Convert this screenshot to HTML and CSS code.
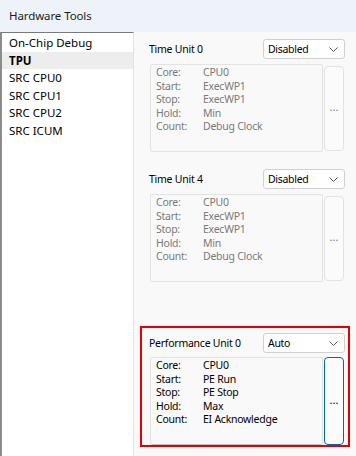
FILE: index.html
```html
<!DOCTYPE html>
<html lang="en">
<head>
    <meta charset="UTF-8">
    <meta name="viewport" content="width=device-width, initial-scale=1.0">
    <title>Hardware Tools</title>
    <link rel="stylesheet" href="styles.css">
</head>
<body>
    <div class="window">
        <div class="titlebar">Hardware Tools</div>
        <div class="main">
            <ul class="toollist">
                <li>On-Chip Debug</li>
                <li class="selected">TPU</li>
                <li>SRC CPU0</li>
                <li>SRC CPU1</li>
                <li>SRC CPU2</li>
                <li>SRC ICUM</li>
            </ul><!-- toollist -->

            <div class="panel">
                <div class="unit disabled">
                    <div class="unit-head">
                        <span class="unit-name">Time Unit 0</span>
                        <div class="combo">
                            <span>Disabled</span>
                            <svg width="9" height="5" viewBox="0 0 9 5"><polyline points="0.5,0.5 4.5,4.5 8.5,0.5" fill="none" stroke="#555" stroke-width="1"/></svg>
                        </div>
                    </div>
                    <div class="unit-body">
                        <div class="info">
                            <span>Core:</span><span>CPU0</span>
                            <span>Start:</span><span>ExecWP1</span>
                            <span>Stop:</span><span>ExecWP1</span>
                            <span>Hold:</span><span>Min</span>
                            <span>Count:</span><span>Debug Clock</span>
                        </div>
                        <div class="more">...</div>
                    </div>
                </div><!-- unit -->

                <div class="unit disabled">
                    <div class="unit-head">
                        <span class="unit-name">Time Unit 4</span>
                        <div class="combo">
                            <span>Disabled</span>
                            <svg width="9" height="5" viewBox="0 0 9 5"><polyline points="0.5,0.5 4.5,4.5 8.5,0.5" fill="none" stroke="#555" stroke-width="1"/></svg>
                        </div>
                    </div>
                    <div class="unit-body">
                        <div class="info">
                            <span>Core:</span><span>CPU0</span>
                            <span>Start:</span><span>ExecWP1</span>
                            <span>Stop:</span><span>ExecWP1</span>
                            <span>Hold:</span><span>Min</span>
                            <span>Count:</span><span>Debug Clock</span>
                        </div>
                        <div class="more">...</div>
                    </div>
                </div><!-- unit -->

                <div class="unit active">
                    <div class="unit-head">
                        <span class="unit-name">Performance Unit 0</span>
                        <div class="combo">
                            <span>Auto</span>
                            <svg width="9" height="5" viewBox="0 0 9 5"><polyline points="0.5,0.5 4.5,4.5 8.5,0.5" fill="none" stroke="#555" stroke-width="1"/></svg>
                        </div>
                    </div>
                    <div class="unit-body">
                        <div class="info">
                            <span>Core:</span><span>CPU0</span>
                            <span>Start:</span><span>PE Run</span>
                            <span>Stop:</span><span>PE Stop</span>
                            <span>Hold:</span><span>Max</span>
                            <span>Count:</span><span>EI Acknowledge</span>
                        </div>
                        <div class="more">...</div>
                    </div>
                </div><!-- unit -->
            </div><!-- panel -->
        </div><!-- main -->
    </div><!-- window -->
</body>
</html>
```
FILE: styles.css
```css
html, body{
    margin: 0;
    padding: 0;
}
body{
    font-family: "Noto Sans", "Open Sans", sans-serif;
    font-size: 10.5px;
    color: #000;
    background: #f9f9f9;
}
.window{
    width: 356px;
    height: 456px;
    display: flex;
    flex-direction: column;
    overflow: hidden;
}
.titlebar{
    height: 32px;
    line-height: 32px;
    padding-left: 9px;
    font-size: 11.5px;
    letter-spacing: -0.1px;
    color: #1b1b1b;
    background: #eef3f9;
}
.main{
    flex: 1;
    display: flex;
}
.toollist{
    width: 131px;
    margin: 0;
    padding: 1px 0 0 0;
    list-style: none;
    background: #fff;
    border-top: 1px solid #7a7a7a;
    border-left: 2px solid #8c8c8c;
    border-right: 1px solid #e2e2e2;
    font-size: 11.5px;
}
.toollist li{
    height: 17.6px;
    line-height: 17.6px;
    padding-left: 7px;
    white-space: nowrap;
}
.toollist li.selected{
    background: #ededed;
    font-weight: bold;
}
.panel{
    flex: 1;
    display: flex;
    flex-direction: column;
}
.unit{
    margin: 0 6px;
    padding: 5px 3px 0 8px;
    border: 2px solid transparent;
    letter-spacing: -0.25px;
}
.unit + .unit{
    margin-top: 8px;
}
.unit.active{
    margin-top: 42px;
    border-color: #e60000;
}
.unit-head{
    display: flex;
    align-items: center;
    justify-content: space-between;
    height: 20px;
}
.unit-name{
    margin-left: -1px;
}
.combo{
    width: 82px;
    height: 20px;
    box-sizing: border-box;
    display: flex;
    align-items: center;
    justify-content: space-between;
    padding: 0 6px 0 4px;
    background: #fff;
    border: 1px solid #d0d0d0;
    border-radius: 3px;
    font-size: 10.5px;
    letter-spacing: -0.3px;
}
.unit-body{
    display: flex;
    gap: 1px;
    margin-top: 5px;
    height: 88px;
}
.active .unit-body{
    margin-top: 4px;
}
.info{
    width: 173px;
    box-sizing: border-box;
    padding: 1px 5px;
    display: grid;
    grid-template-columns: 47px auto;
    grid-auto-rows: 13.5px;
    line-height: 13.5px;
    align-content: start;
    background: #f9f9f9;
    border: 1px solid #e3e3e3;
    border-radius: 2px;
}
.more{
    width: 20px;
    box-sizing: border-box;
    margin: 2px 0 1px 0;
    display: flex;
    align-items: center;
    justify-content: center;
    background: #fbfbfb;
    border: 1px solid #e3e3e3;
    border-radius: 4px;
    font-size: 11px;
    letter-spacing: 0;
    padding-bottom: 4px;
}
.disabled .info,
.disabled .more{
    color: #7a7a7a;
}
.active .info{
    border-bottom-color: #c4c4c4;
}
.active .more{
    margin: 0;
    border: 1px solid #0067c0;
    color: #000;
}
```
